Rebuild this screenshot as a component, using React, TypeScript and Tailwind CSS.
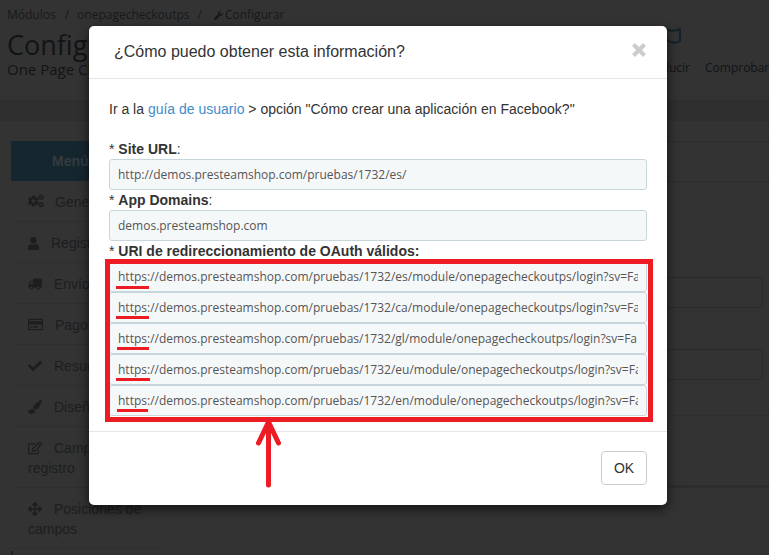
import type { ReactNode } from 'react';
import {
  FaArrowsAlt,
  FaCheck,
  FaCogs,
  FaPaintBrush,
  FaRegCreditCard,
  FaRegEdit,
  FaTruck,
  FaUser,
  FaWrench,
} from 'react-icons/fa';

const arial = "font-['Liberation_Sans',Arial,sans-serif]";
const openSans = "font-['Open_Sans','Noto_Sans',sans-serif]";

type Item = { icon: ReactNode; label: string; rest?: string; gap: string; height: string };

const menu: Item[] = [
  { icon: <FaCogs className="size-4" />, label: 'General', gap: 'mr-[11px]', height: 'h-[41px]' },
  { icon: <FaUser className="-ml-px size-[13px]" />, label: 'Registro', gap: 'mr-[11px]', height: 'h-[41px]' },
  { icon: <FaTruck className="size-[14px] -scale-x-100" />, label: 'Envío', gap: 'mr-3', height: 'h-[41px]' },
  { icon: <FaRegCreditCard className="size-[15px]" />, label: 'Pago', gap: 'mr-3', height: 'h-[41px]' },
  { icon: <FaCheck className="size-[14px]" />, label: 'Resumen', gap: 'mr-3', height: 'h-[41px]' },
  { icon: <FaPaintBrush className="size-[14px]" />, label: 'Diseño', gap: 'mr-3', height: 'h-[41px]' },
  { icon: <FaRegEdit className="size-[14px]" />, label: 'Campos', rest: 'registro', gap: 'mr-3', height: 'h-[61px]' },
  { icon: <FaArrowsAlt className="size-[14px]" />, label: 'Posiciones de', rest: 'campos', gap: 'mr-3', height: 'h-[61px]' },
];

const uris = [
  { lang: 'es', tail: 'Facebook', mark: 'left-[7px] top-[25px] w-[33px]' },
  { lang: 'ca', tail: 'Facebook', mark: 'left-[7px] top-[24px] w-[33px]' },
  { lang: 'gl', tail: 'Fa', mark: 'left-[8px] top-[24px] w-[32px]' },
  { lang: 'eu', tail: 'Facebook', mark: 'left-[7px] top-[24px] w-[34px]' },
  { lang: 'en', tail: 'Facebook', mark: 'left-[8px] top-[24px] w-[31px]' },
];

function Field({ children }: { children: ReactNode }) {
  return (
    <div
      className={`${openSans} flex h-[31px] items-center rounded-[3px] border border-[#c7d6db] bg-[#f5f8f9] px-2 text-[12px] text-[#555]`}
    >
      <span className="block w-full overflow-hidden whitespace-nowrap">{children}</span>
    </div>
  );
}

function Backdrop() {
  return (
    <div className="flex h-full flex-col">
      <header className={`${openSans} flex h-[101px] shrink-0 justify-between border-b border-[#2c2c2c] text-[#111416]`}>
        <div className="pl-[7px] pt-[7px]">
          <nav className="flex h-4 items-center whitespace-nowrap text-[12px] text-[#16191b]">
            <span>Módulos</span>
            <span className="ml-[9px] mr-2">/</span>
            <span>onepagecheckoutps</span>
            <span className="ml-2 mr-3">/</span>
            <FaWrench className="mr-[2px] size-[9px]" />
            <span>Configurar</span>
          </nav>
          <h1 className="mt-1 text-[27px] leading-9">Configurar</h1>
          <p className="-mt-[3px] text-[15px] leading-[19px]">One Page Checkout PS</p>
        </div>
        <div className="flex gap-[15px] pt-[27px] text-[12px]">
          <div className="flex w-[55px] flex-col items-end">
            <svg className="mr-[9px]" width="20" height="18" viewBox="0 0 20 18" fill="none" stroke="#14232b" strokeWidth="2">
              <path d="M1 2Q4 1 7 3Q12 5 19 2V14Q15 17 10 15Q5 12 1 14Z" />
            </svg>
            <span className="mt-[15px] leading-4">Traducir</span>
          </div>
          <span className="mt-[33px] w-[64px] whitespace-nowrap leading-4">Comprobar</span>
        </div>
      </header>
      <div className="h-5 shrink-0 bg-[#2f2f2f]" />
      <div className="flex flex-1">
        <aside className={`${arial} w-[160px] shrink-0 pl-[11px] pt-5 text-[14px] text-[#1c1e20]`}>
          <div className="flex h-[40px] items-center bg-[#16262f] pl-[41px] font-bold text-[#343b3f]">Menú</div>
          {menu.map((item) => (
            <div key={item.label} className={`${item.height} ml-[2px] border-b border-[#2e2e2e] pl-[15px] pt-[11px] leading-5`}>
              <span className={`${item.gap} inline-flex align-[-2px]`}>{item.icon}</span>
              {item.label}
              {item.rest && <span className="block">{item.rest}</span>}
            </div>
          ))}
          <div className="mt-[2px] h-[10px] w-[2px] bg-[#16262f]" />
        </aside>
        <section className="flex-1 pt-5">
          <div className="h-[41px] border-y border-[#2c2c2c]" />
          <div className="pr-[6px] pt-[95px]">
            <div className="h-[31px] rounded-[3px] border border-[#2a2a2a]" />
            <div className="mt-[41px] h-[31px] rounded-[3px] border border-[#2a2a2a]" />
          </div>
          <div className="mt-[35px] h-[73px] border-b-[3px] border-t border-b-[#2d2d2d] border-t-[#2f2f2f]" />
        </section>
      </div>
    </div>
  );
}

export default function App() {
  return (
    <main className="relative h-[555px] w-[769px] overflow-hidden bg-[#333]">
      <Backdrop />
      <div
        role="dialog"
        className={`${arial} absolute left-[89px] top-[26px] flex h-[479px] w-[578px] flex-col rounded-[5px] bg-white text-[14px] text-[#333] shadow-[0_4px_12px_rgba(0,0,0,0.65)]`}
      >
        <div className="flex h-[53px] shrink-0 items-center justify-between border-b border-[#e5e5e5] pl-[25px] pr-[20px]">
          <h2 className="text-[16px]">¿Cómo puedo obtener esta información?</h2>
          <svg className="mb-[4px]" width="16" height="16" viewBox="0 0 16 16" stroke="#ccc" strokeWidth="4.2">
            <path d="M2.5 2.5L13.5 13.5M13.5 2.5L2.5 13.5" />
          </svg>
        </div>
        <div className="flex h-[352px] shrink-0 flex-col px-5 pt-5">
          <p className="leading-5">
            Ir a la <span className="text-[#428bca]">guía de usuario</span> {'> opción "Cómo crear una aplicación en Facebook?"'}
          </p>
          <p className="mt-5 leading-5">* <b>Site URL</b>:</p>
          <Field>http://demos.presteamshop.com/pruebas/1732/es/</Field>
          <p className="leading-5">* <b>App Domains</b>:</p>
          <Field>demos.presteamshop.com</Field>
          <p className="leading-5">* <b>URI de redireccionamiento de OAuth válidos:</b></p>
          <div className="relative">
            {uris.map(({ lang, tail, mark }) => (
              <div key={lang} className="relative">
                <Field>{`https://demos.presteamshop.com/pruebas/1732/${lang}/module/onepagecheckoutps/login?sv=${tail}`}</Field>
                <span className={`${mark} absolute h-[3px] bg-[#ed1c24]`} />
              </div>
            ))}
            <div className="absolute -left-[4px] -top-[2px] h-[163px] w-[548px] border-[5px] border-[#ed1c24]" />
            <svg className="absolute left-[145px] top-[158px]" width="28" height="70" viewBox="0 0 28 70" fill="none" stroke="#ed1c24" strokeWidth="5" strokeLinecap="round">
              <path d="M14.5 3V66M14.5 3L4.5 24M14.5 3L24.5 24" />
            </svg>
          </div>
        </div>
        <div className="flex flex-1 justify-end border-t border-[#e5e5e5] pr-5 pt-[19px]">
          <button className="h-[34px] w-[46px] rounded-[4px] border border-[#ccc] bg-white text-[14px]">OK</button>
        </div>
      </div>
    </main>
  );
}
